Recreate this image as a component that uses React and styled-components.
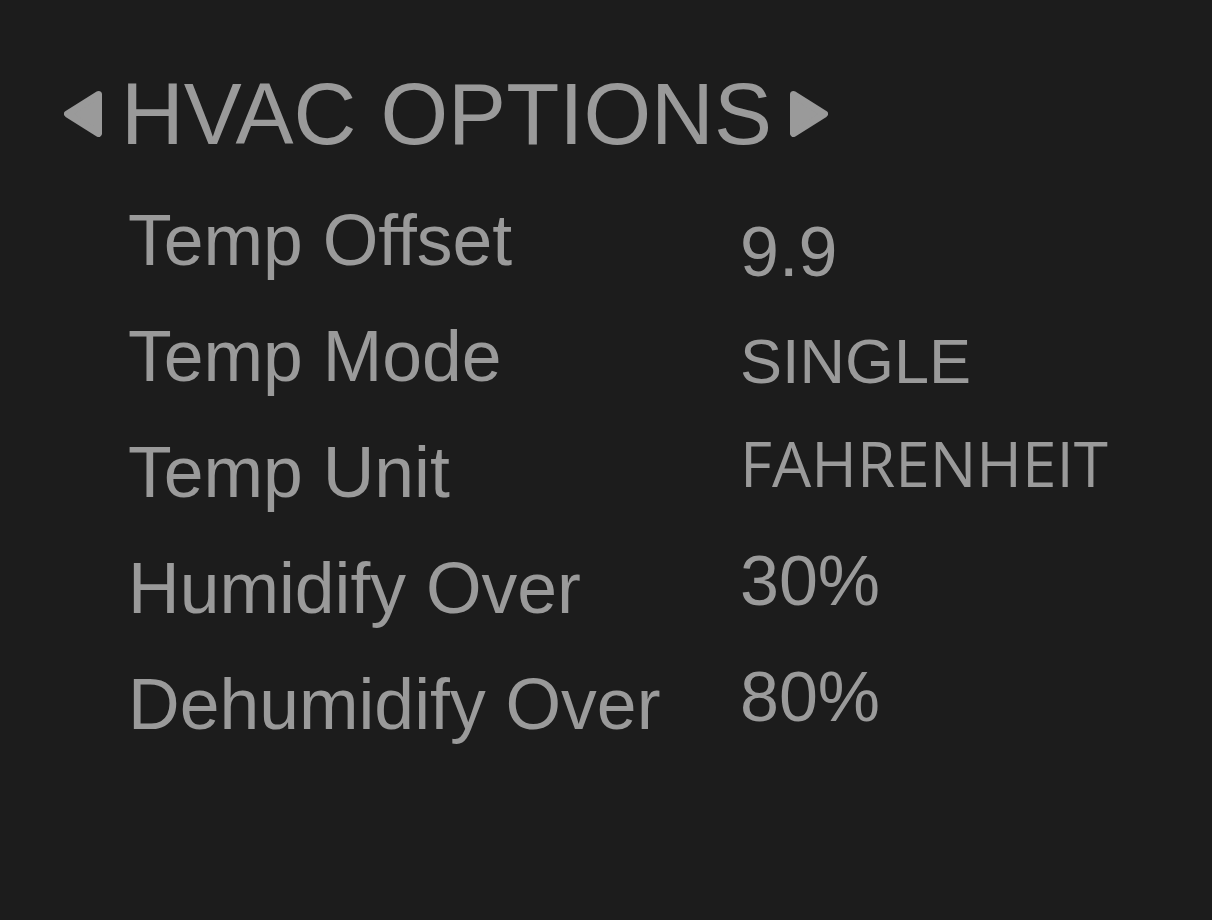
import React from 'react';
import styled, { createGlobalStyle } from 'styled-components';

const GlobalStyle = createGlobalStyle`
  html, body {
    margin: 0;
    padding: 0;
    background: #1c1c1c;
  }
`;

const Screen = styled.div`
  width: 1212px;
  height: 920px;
  background: #1c1c1c;
  color: #9a9a9a;
  font-family: 'Liberation Sans', Arial, sans-serif;
  padding-top: 64px;
  box-sizing: border-box;
  overflow: hidden;
`;

const TitleBar = styled.div`
  display: flex;
  align-items: center;
  padding-left: 64px;
  height: 100px;
`;

const Title = styled.h1`
  margin: 0 18px 0 19px;
  font-size: 87px;
  line-height: 100px;
  font-weight: 400;
  white-space: nowrap;
`;

const Arrow = styled.svg`
  width: 38px;
  height: 46px;
  display: block;
  fill: #9a9a9a;
  stroke: #9a9a9a;
  stroke-width: 7;
  stroke-linejoin: round;
`;

const List = styled.div`
  margin-top: 40px;
  padding-left: 128px;
  display: flex;
  flex-direction: column;
`;

const Row = styled.div`
  display: grid;
  grid-template-columns: 612px auto;
  align-items: start;
  height: 116px;
`;

const Label = styled.div`
  font-size: 71.5px;
  line-height: 72px;
  white-space: nowrap;
`;

const Value = styled.div`
  font-family: ${(p) => (p.$open ? "'Open Sans', sans-serif" : "'Liberation Sans', Arial, sans-serif")};
  font-size: ${(p) => p.$size}px;
  line-height: 72px;
  margin-top: ${(p) => p.$shift}px;
  white-space: nowrap;
`;

const rows = [
  { label: 'Temp Offset', value: '9.9', size: 70, shift: 12 },
  { label: 'Temp Mode', value: 'SINGLE', size: 63, shift: 5 },
  { label: 'Temp Unit', value: 'FAHRENHEIT', open: true, size: 62, shift: -9 },
  { label: 'Humidify Over', value: '30%', size: 70, shift: -7 },
  { label: 'Dehumidify Over', value: '80%', size: 70, shift: -7 },
];

const LeftArrow = () => (
  <Arrow viewBox="0 0 38 46">
    <path d="M34.5 3.5 L3.5 23 L34.5 42.5 Z" />
  </Arrow>
);

const RightArrow = () => (
  <Arrow viewBox="0 0 38 46">
    <path d="M3.5 3.5 L34.5 23 L3.5 42.5 Z" />
  </Arrow>
);

const App = () => {
  return (
    <Screen>
      <GlobalStyle />
      <TitleBar>
        <LeftArrow />
        <Title>HVAC OPTIONS</Title>
        <RightArrow />
      </TitleBar>
      <List>
        {rows.map((r) => (
          <Row key={r.label}>
            <Label>{r.label}</Label>
            <Value $open={r.open} $size={r.size} $shift={r.shift}>
              {r.value}
            </Value>
          </Row>
        ))}
      </List>
    </Screen>
  );
};

export default App;
